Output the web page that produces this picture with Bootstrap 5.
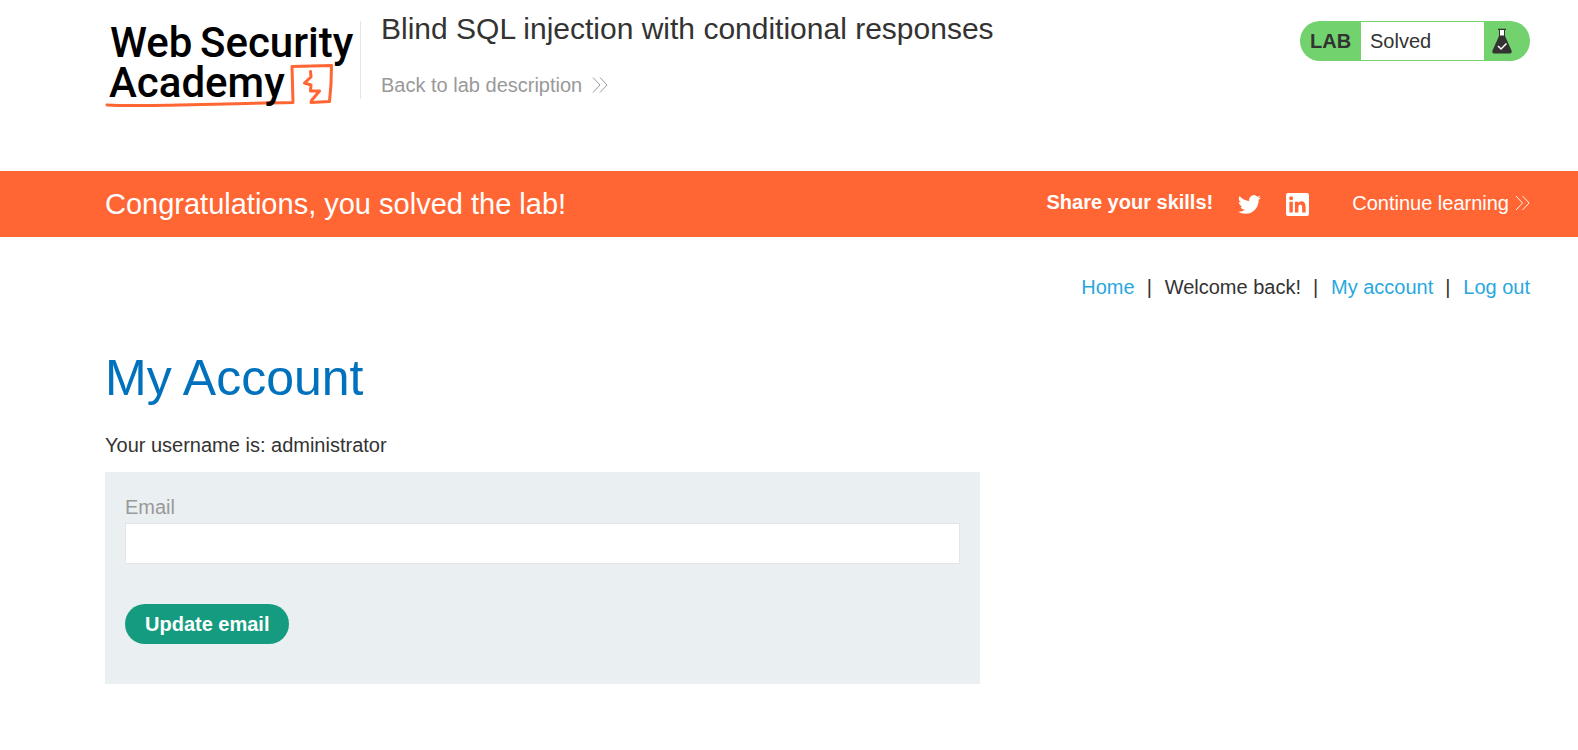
<!DOCTYPE html>
<html lang="en">
<head>
<meta charset="utf-8">
<meta name="viewport" content="width=device-width, initial-scale=1">
<title>Blind SQL injection with conditional responses</title>
<link href="https://cdn.jsdelivr.net/npm/bootstrap@5.3.0/dist/css/bootstrap.min.css" rel="stylesheet">
<style>
body { font-family: "Liberation Sans", Arial, sans-serif; font-size: 20px; line-height: 24px; color: #333332; }
a { text-decoration: none; }
.page-gutter { padding-left: 105px; padding-right: 48px; }
.lab-header { padding-top: 11px; min-height: 171px; }
.logo-link { margin-top: 8px; padding-right: 5px; }
.title-block { padding-left: 20px; }
.rule-line { width: 1px; height: 78px; margin-top: 10px; background: #e4e4e4; }
.lab-title { font-size: 30px; line-height: 36px; font-weight: 400; margin-bottom: 26px; }
.back-link { color: #999; gap: 10px; }
.lab-status { width: 230px; height: 40px; margin-top: 10px; border-radius: 20px; background: #72d26e; }
.status-name { width: 61px; padding-left: 10px; }
.status-value { height: 38px; padding-left: 9px; background: #fff; }
.status-icon { width: 46px; padding-left: 8px; }
.solved-banner { background: #f63; color: #fff; min-height: 66px; }
.solved-banner h2 { font-size: 29px; line-height: 34px; font-weight: 400; }
.share-row { gap: 25px; }
.share-row strong { padding-bottom: 4px; }
.continue-link { margin-left: 18px; gap: 6px; padding-bottom: 2px; }
.top-nav { padding-top: 38px; gap: 12px; }
.top-nav a { color: #29a7de; }
.nav-sep { width: 6px; }
.account-title { font-size: 50px; line-height: 60px; font-weight: 400; color: #0071bc; margin: 49px 0 25px; }
.username-line { margin-bottom: 15px; }
.email-form { max-width: 875px; padding: 23px 20px 40px; background: #eaeff2; }
.email-form label { color: #999; }
.email-form .form-control { height: 41px; margin: 4px 0 40px; border-color: #e4e4e4; font-size: 20px; }
.btn-update { padding: 8px 20px; border: 0; font-size: 20px; line-height: 24px; background: #159c80; }
.btn-update:hover { background: #128a71; }
</style>
</head>
<body>
<header class="lab-header page-gutter d-flex align-items-start">
  <a class="logo-link" href="#" aria-label="Web Security Academy">
    <svg class="d-block" width="250" height="92" viewBox="0 0 250 92">
      <g fill="none" stroke="#f63" stroke-width="3" stroke-linejoin="round" stroke-linecap="round">
        <path d="M2 86C40 88 100 85 188 83.500L187 47.500L226.500 46.500L226 65L224.500 82.500L206 83.500L206.500 81.500L214.500 72H205.500L206 66L199.500 64L206 58L205.500 52.500"/>
      </g>
      <g font-family="Roboto, sans-serif" font-weight="500" font-size="42" fill="#000">
        <text x="5" y="38">Web</text>
        <text x="95" y="38">Security</text>
        <text x="4" y="78">Academy</text>
      </g>
    </svg>
  </a>
  <div class="rule-line"></div>
  <div class="title-block">
    <h1 class="lab-title">Blind SQL injection with conditional responses</h1>
    <a class="back-link d-inline-flex align-items-center" href="#">Back to lab description
      <svg width="16" height="16" viewBox="0 0 16 16" fill="none" stroke="currentColor"><path d="M1 .5L8 8L1 15.500M8 .5L15 8L8 15.500"/></svg>
    </a>
  </div>
  <div class="lab-status d-flex align-items-center ms-auto flex-shrink-0">
    <strong class="status-name">LAB</strong>
    <span class="status-value flex-fill d-flex align-items-center">Solved</span>
    <span class="status-icon">
      <svg class="d-block" width="20" height="26" viewBox="0 0 20 26"><path d="M7 2h6v7H7z" fill="#fff"/><path d="M6 .8h8v1.200h-1v6l6.500 14.500q.8 3-1.500 3H2q-2.300 0-1.500-3L7 8V2H6zM8 2v5.500h4V2z" fill="#333332" fill-rule="evenodd"/><path d="M6 18l3 3 5.500-5.500" fill="none" stroke="#fff" stroke-width="1.500"/></svg>
    </span>
  </div>
</header>

<section class="solved-banner page-gutter d-flex align-items-center justify-content-between">
  <h2 class="mb-0">Congratulations, you solved the lab!</h2>
  <div class="share-row d-flex align-items-center">
    <strong>Share your skills!</strong>
    <a href="#" class="text-white" aria-label="Share on Twitter"><svg class="d-block" width="23" height="23" viewBox="0 0 24 24" fill="currentColor"><path d="M23.950 4.570a10 10 0 0 1-2.820.770 4.960 4.960 0 0 0 2.160-2.720c-.950.550-2 .960-3.130 1.180a4.920 4.920 0 0 0-8.380 4.480C7.690 8.100 4.070 6.130 1.640 3.160a4.920 4.920 0 0 0 1.520 6.570 4.900 4.900 0 0 1-2.230-.610v.060a4.920 4.920 0 0 0 3.950 4.830 5 5 0 0 1-2.210.080 4.940 4.940 0 0 0 4.600 3.420A9.870 9.870 0 0 1 0 19.540a14 14 0 0 0 7.550 2.210c9.050 0 14-7.500 14-13.980 0-.210 0-.420-.020-.630a9.900 9.900 0 0 0 2.420-2.570z"/></svg></a>
    <a href="#" class="text-white" aria-label="Share on LinkedIn"><svg class="d-block" width="23" height="23" viewBox="0 0 24 24" fill="currentColor"><path fill-rule="evenodd" d="M2 0h20a2 2 0 0 1 2 2v20a2 2 0 0 1-2 2H2a2 2 0 0 1-2-2V2a2 2 0 0 1 2-2zM3.560 9v11.450h3.560V9zM5.340 3.300a2.070 2.070 0 1 0 0 4.140 2.070 2.070 0 0 0 0-4.140zM9.350 9v11.450h3.560v-5.600c0-3.900 3.980-3.600 3.980 0v5.600h3.560v-6.270c0-6-5.300-6.800-7.540-3.620V9z"/></svg></a>
    <a class="continue-link text-white d-flex align-items-center" href="#">Continue learning
      <svg width="15" height="16" viewBox="0 0 16 16" fill="none" stroke="currentColor"><path d="M1 .5L8 8L1 15.500M8 .5L15 8L8 15.500"/></svg>
    </a>
  </div>
</section>

<main class="page-gutter">
  <nav class="top-nav d-flex justify-content-end">
    <a href="#">Home</a><span class="nav-sep">|</span><span>Welcome back!</span><span class="nav-sep">|</span><a href="#">My account</a><span class="nav-sep">|</span><a href="#">Log out</a>
  </nav>
  <h1 class="account-title">My Account</h1>
  <p class="username-line">Your username is: administrator</p>
  <form class="email-form">
    <label class="d-block" for="email">Email</label>
    <input class="form-control rounded-0" type="email" id="email" name="email">
    <button class="btn btn-update rounded-pill text-white fw-bold" type="submit">Update email</button>
  </form>
</main>
<script src="https://cdn.jsdelivr.net/npm/bootstrap@5.3.0/dist/js/bootstrap.bundle.min.js"></script>
</body>
</html>
